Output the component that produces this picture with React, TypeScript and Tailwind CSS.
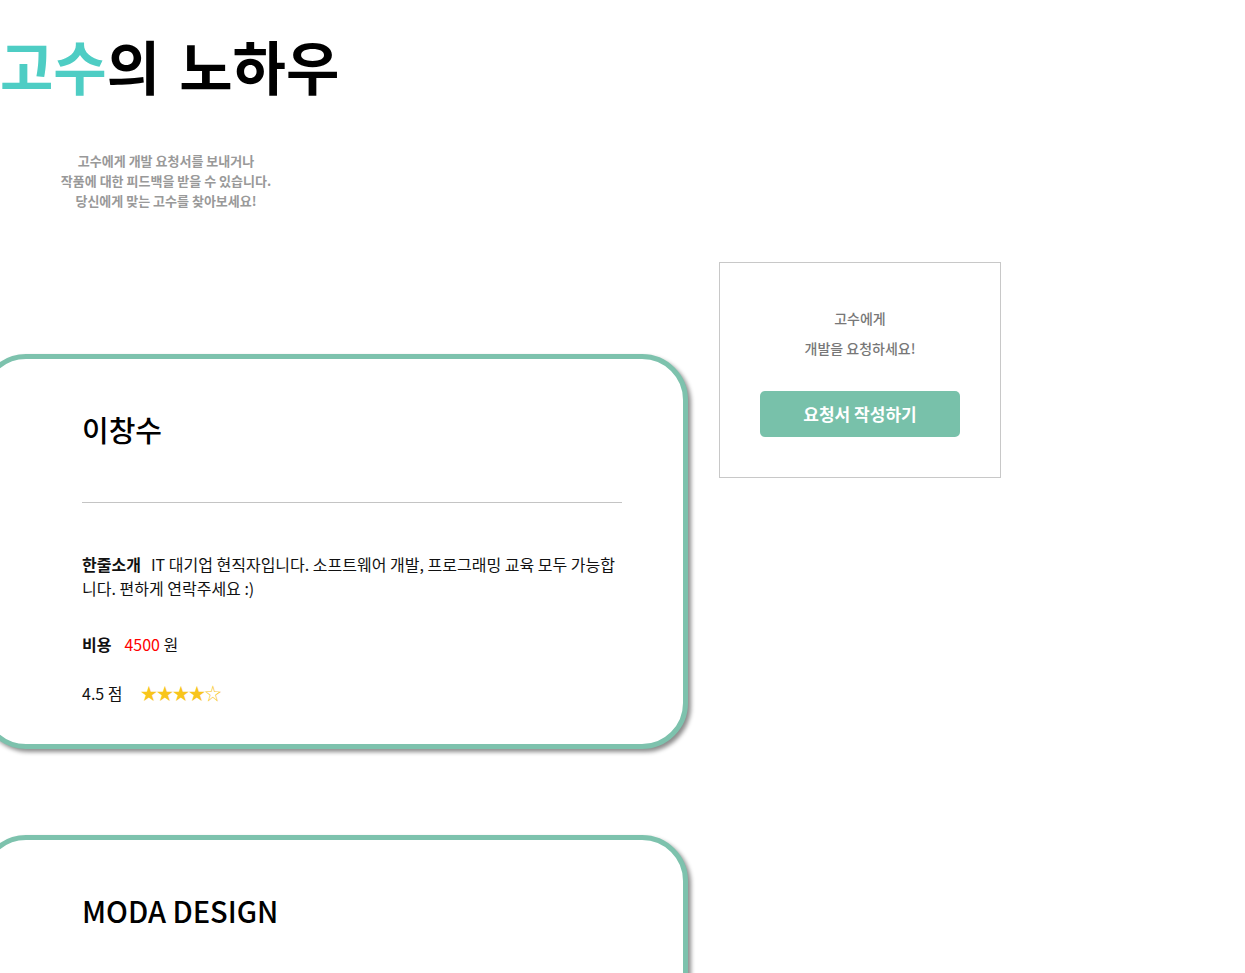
import React from "react";

const FONT = "font-['Noto_Sans_CJK_KR','Noto_Sans',sans-serif]";

type Expert = {
  name: string;
  intro: string;
  price: number;
  score: number;
  stars: string;
};

const EXPERTS: Expert[] = [
  {
    name: "이창수",
    intro: "IT 대기업 현직자입니다. 소프트웨어 개발, 프로그래밍 교육 모두 가능합니다. 편하게 연락주세요 :)",
    price: 4500,
    score: 4.5,
    stars: "★★★★☆",
  },
  {
    name: "MODA DESIGN",
    intro: "디자인 전문 스튜디오입니다. 웹/앱 UI 디자인 피드백 드립니다.",
    price: 5000,
    score: 4.8,
    stars: "★★★★★",
  },
];

function ExpertCard({ e }: { e: Expert }) {
  return (
    <div className="ml-[-20px] w-[708px] rounded-[46px] border-[5px] border-[#7dc2ad] bg-white pl-[97px] pr-[61px] pt-[52px] pb-[39px] shadow-[3px_3px_4px_rgba(0,0,0,0.45)]">
      <h2 className="text-[29px] font-medium leading-[36px] text-black">{e.name}</h2>
      <div className="mt-[55px] h-px bg-[#c4c4c4]" />
      <p className="mt-[49px] text-[16px] leading-[24px] text-[#111]">
        <b className="mr-[10px] font-bold">한줄소개</b>
        {e.intro}
      </p>
      <p className="mt-[32px] text-[16px] leading-[24px] text-[#111]">
        <b className="mr-[13px] font-bold">비용</b>
        <span className="text-[#ff0000]">{e.price}</span> 원
      </p>
      <p className="mt-[25px] flex items-center text-[16px] leading-[24px] text-[#111]">
        <span>{e.score} 점</span>
        <span className="ml-[18px] text-[17px] tracking-[-1px] text-[#f8c51c]">{e.stars}</span>
      </p>
    </div>
  );
}

export default function App() {
  return (
    <div className={`${FONT} flex min-h-[973px] overflow-hidden bg-white`}>
      <div className="w-[719px] shrink-0">
        <h1 className="pt-[30px] text-[58px] font-bold leading-[70px] text-black [word-spacing:6px]">
          <span className="text-[#4ecdc4]">고수</span>의 노하우
        </h1>
        <div className="mt-[51px] w-[332px] text-center text-[13px] font-bold leading-[20px] text-[#999]">
          고수에게 개발 요청서를 보내거나
          <br />
          작품에 대한 피드백을 받을 수 있습니다.
          <br />
          당신에게 맞는 고수를 찾아보세요!
        </div>
        <div className="mt-[143px] flex flex-col gap-[86px]">
          {EXPERTS.map((e) => (
            <ExpertCard key={e.name} e={e} />
          ))}
        </div>
      </div>
      <div className="pt-[262px]">
        <div className="flex h-[216px] w-[282px] flex-col items-center border border-[#c8c8c8] pt-[40px]">
          <p className="text-[14px] font-medium leading-[30px] text-[#777]">고수에게</p>
          <p className="text-[14px] font-medium leading-[30px] text-[#777]">개발을 요청하세요!</p>
          <button className="mt-[28px] h-[46px] w-[200px] rounded-[5px] bg-[#78c1aa] text-[17px] font-bold text-white">
            요청서 작성하기
          </button>
        </div>
      </div>
    </div>
  );
}
